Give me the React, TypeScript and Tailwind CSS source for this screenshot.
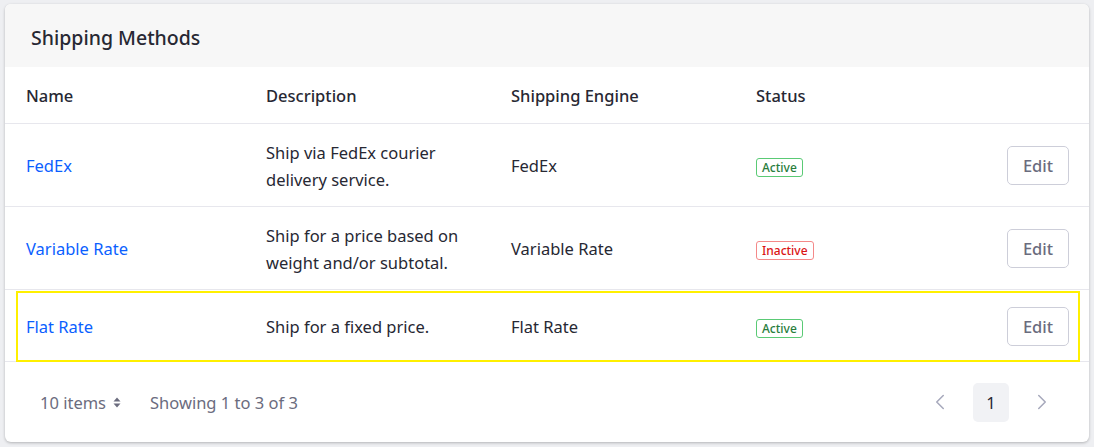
import { ChevronLeft, ChevronRight } from "lucide-react";

type Method = {
  name: string;
  description: string[];
  engine: string;
  active: boolean;
  focused?: boolean;
  height: string;
};

const methods: Method[] = [
  {
    name: "FedEx",
    description: ["Ship via FedEx courier", "delivery service."],
    engine: "FedEx",
    active: true,
    height: "h-[83px]",
  },
  {
    name: "Variable Rate",
    description: ["Ship for a price based on", "weight and/or subtotal."],
    engine: "Variable Rate",
    active: false,
    height: "h-[83px]",
  },
  {
    name: "Flat Rate",
    description: ["Ship for a fixed price."],
    engine: "Flat Rate",
    active: true,
    focused: true,
    height: "h-[72px]",
  },
];

function StatusBadge({ active }: { active: boolean }) {
  return active ? (
    <span className="inline-flex h-[19px] items-center rounded-[3px] border border-[#5aca75] px-[5px] text-[12px] font-medium text-[#287d3c]">
      Active
    </span>
  ) : (
    <span className="inline-flex h-[19px] items-center rounded-[3px] border border-[#f48989] px-[5px] text-[12px] font-medium text-[#da1414]">
      Inactive
    </span>
  );
}

function SortCaret() {
  return (
    <svg width="8" height="11" viewBox="0 0 8 11" className="ml-[7px]">
      <path d="M4 0.5 L7.5 4.5 H0.5 Z" fill="#6b6c7e" />
      <path d="M4 10.5 L7.5 6.5 H0.5 Z" fill="#6b6c7e" />
    </svg>
  );
}

export default function App() {
  return (
    <div
      className="h-[447px] w-[1094px] bg-[#eeeff2] pt-[4px] pl-[5px] text-[16.5px] leading-[27px] text-[#272833]"
      style={{ fontFamily: '"Segoe UI", "Noto Sans", "Open Sans", sans-serif' }}
    >
      <div className="w-[1084px] overflow-hidden rounded-[6px] bg-white shadow-[0_1px_3px_rgba(0,0,0,0.25)]">
        <div className="flex h-[63px] items-center bg-[#f7f7f7] px-[26px] pt-[3px] text-[19.5px] font-[550]">
          Shipping Methods
        </div>

        <div className="flex h-[57px] items-center border-b border-[#e7e7ed] px-[21px] pt-[1px] font-[550]">
          <div className="w-[240px]">Name</div>
          <div className="w-[245px]">Description</div>
          <div className="w-[245px]">Shipping Engine</div>
          <div className="flex-1">Status</div>
        </div>

        {methods.map((m) => (
          <div
            key={m.name}
            className={`relative flex ${m.height} items-center border-b border-[#e7e7ed] pt-[1px] pr-[20px] pl-[21px]`}
          >
            {m.focused && (
              <div className="pointer-events-none absolute top-[1px] right-[9px] bottom-[-1px] left-[11px] border-2 border-[#fff000]" />
            )}
            <div className="w-[240px] text-[#0b5fff]">{m.name}</div>
            <div className="w-[245px]">
              {m.description.map((line) => (
                <div key={line}>{line}</div>
              ))}
            </div>
            <div className="w-[245px]">{m.engine}</div>
            <div className="flex-1">
              <StatusBadge active={m.active} />
            </div>
            <button className="h-[39px] w-[62px] rounded-[5px] border border-[#cdced9] bg-white font-medium text-[#6b6c7e]">
              Edit
            </button>
          </div>
        ))}

        <div className="flex h-[80px] items-center pr-[34px] pl-[35px] text-[#6b6c7e]">
          <div className="flex items-center">
            10 items
            <SortCaret />
          </div>
          <div className="ml-[29px]">Showing 1 to 3 of 3</div>
          <div className="ml-auto flex items-center">
            <ChevronLeft size={26} strokeWidth={1.4} className="text-[#a7a9bc]" />
            <div className="mx-[20px] flex h-[39px] w-[36px] items-center justify-center rounded-[5px] bg-[#f1f2f5] text-[#272833]">
              1
            </div>
            <ChevronRight size={26} strokeWidth={1.4} className="text-[#a7a9bc]" />
          </div>
        </div>
      </div>
    </div>
  );
}
